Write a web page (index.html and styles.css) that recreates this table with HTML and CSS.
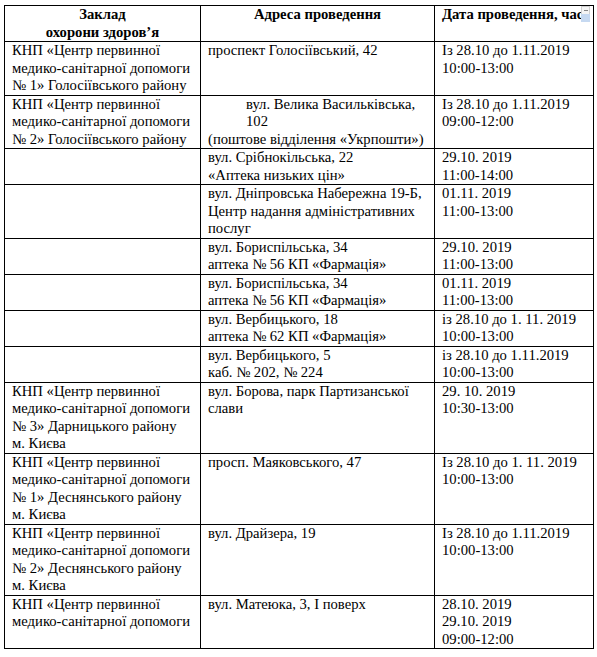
FILE: index.html
```html
<!DOCTYPE html>
<html lang="uk">
<head>
<meta charset="utf-8">
<title>Заклади охорони здоров'я</title>
<link rel="stylesheet" href="styles.css">
</head>
<body>
<div class="wrap">
<table class="sched">
  <colgroup>
    <col class="c1"><col class="c2"><col class="c3">
  </colgroup>
  <thead>
    <tr>
      <th class="center">Заклад<br>охорони здоров’я</th>
      <th class="center">Адреса проведення</th>
      <th class="left nowrap">Дата проведення, час</th>
    </tr>
  </thead>
  <tbody>
    <tr>
      <td>КНП «Центр первинної медико-санітарної допомоги № 1» Голосіївського району</td>
      <td>проспект Голосіївський, 42</td>
      <td>Із 28.10 до 1.11.2019<br>10:00-13:00</td>
    </tr>
    <tr>
      <td>КНП «Центр первинної медико-санітарної допомоги № 2» Голосіївського району</td>
      <td><span class="ind1">вул. Велика Васильківська,</span><span class="ind2">102</span>(поштове відділення «Укрпошти»)</td>
      <td>Із 28.10 до 1.11.2019<br>09:00-12:00</td>
    </tr>
    <tr>
      <td></td>
      <td>вул. Срібнокільська, 22<br>«Аптека низьких цін»</td>
      <td>29.10. 2019<br>11:00-14:00</td>
    </tr>
    <tr>
      <td></td>
      <td>вул. Дніпровська Набережна 19-Б, Центр надання адміністративних послуг</td>
      <td>01.11. 2019<br>11:00-13:00</td>
    </tr>
    <tr>
      <td></td>
      <td>вул. Бориспільська, 34<br>аптека № 56 КП «Фармація»</td>
      <td>29.10. 2019<br>11:00-13:00</td>
    </tr>
    <tr>
      <td></td>
      <td>вул. Бориспільська, 34<br>аптека № 56 КП «Фармація»</td>
      <td>01.11. 2019<br>11:00-13:00</td>
    </tr>
    <tr>
      <td></td>
      <td>вул. Вербицького, 18<br>аптека № 62 КП «Фармація»</td>
      <td>із 28.10 до 1. 11. 2019<br>10:00-13:00</td>
    </tr>
    <tr>
      <td></td>
      <td>вул. Вербицького, 5<br>каб. № 202, № 224</td>
      <td>із 28.10 до 1.11.2019<br>10:00-13:00</td>
    </tr>
    <tr>
      <td>КНП «Центр первинної медико-санітарної допомоги № 3» Дарницького району<br>м. Києва</td>
      <td>вул. Борова, парк Партизанської слави</td>
      <td>29. 10. 2019<br>10:30-13:00</td>
    </tr>
    <tr>
      <td>КНП «Центр первинної медико-санітарної допомоги № 1» Деснянського району<br>м. Києва</td>
      <td>просп. Маяковського, 47</td>
      <td>Із 28.10 до 1. 11. 2019<br>10:00-13:00</td>
    </tr>
    <tr>
      <td>КНП «Центр первинної медико-санітарної допомоги № 2» Деснянського району<br>м. Києва</td>
      <td>вул. Драйзера, 19</td>
      <td>Із 28.10 до 1.11.2019<br>10:00-13:00</td>
    </tr>
    <tr>
      <td>КНП «Центр первинної медико-санітарної допомоги</td>
      <td>вул. Матеюка, 3, І поверх</td>
      <td>28.10. 2019<br>29.10. 2019<br>09:00-12:00</td>
    </tr>
  </tbody>
</table>
<div class="handle"><span class="handle-top"></span><span class="handle-bot"></span></div>
</div>
</body>
</html>
```

FILE: styles.css
```css
html, body {
  margin: 0;
  padding: 0;
  background: #fff;
}
body {
  font-family: "Liberation Serif", "Times New Roman", serif;
  font-size: 14.67px;
  line-height: 17.5px;
  color: #000;
}
.wrap {
  position: relative;
  padding: 5px 0 0 4px;
  width: 589px;
}
.sched {
  border-collapse: collapse;
  table-layout: fixed;
  width: 589px;
}
.c1 { width: 196px; }
.c2 { width: 234px; }
.c3 { width: 159px; }
.sched th, .sched td {
  border: 1px solid #000;
  padding: 0 4px 0 7px;
  vertical-align: top;
  text-align: left;
  font-weight: normal;
}
.sched th {
  font-weight: bold;
}
.sched th.center {
  text-align: center;
  padding-left: 4px;
}
.nowrap {
  white-space: nowrap;
  overflow: hidden;
}
.ind1, .ind2 {
  display: block;
  padding-left: 38px;
}
.handle {
  position: absolute;
  left: 581px;
  top: 6px;
  width: 9px;
  height: 16px;
  display: flex;
  flex-direction: column;
}
.handle-top {
  height: 7px;
  background: #f4f4f4;
  border: 1px solid #d0d0d0;
  border-bottom: none;
  position: relative;
}
.handle-top::after {
  content: "";
  position: absolute;
  left: 2px;
  top: 3px;
  width: 4px;
  height: 1px;
  background: #888;
}
.handle-bot {
  flex: 1;
  background: #c6d9f1;
}
```
